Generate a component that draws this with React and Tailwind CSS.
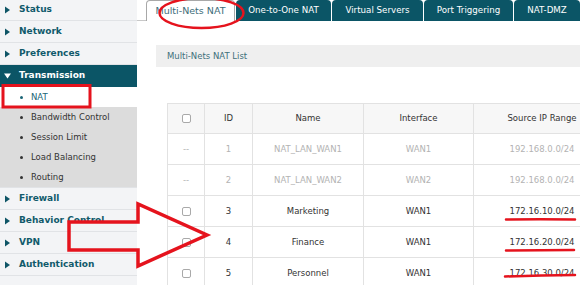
import React from "react";

const topItems = ["Status", "Network", "Preferences"];
const subItems = ["NAT", "Bandwidth Control", "Session Limit", "Load Balancing", "Routing"];
const bottomItems = ["Firewall", "Behavior Control", "VPN", "Authentication"];

const tabs = [
  { name: "One-to-One NAT", w: "w-[95px]" },
  { name: "Virtual Servers", w: "w-[91px]" },
  { name: "Port Triggering", w: "w-[89px]" },
  { name: "NAT-DMZ", w: "w-[66px]" },
];

const rows = [
  { id: 1, name: "NAT_LAN_WAN1", iface: "WAN1", ip: "192.168.0.0/24", off: true },
  { id: 2, name: "NAT_LAN_WAN2", iface: "WAN2", ip: "192.168.0.0/24", off: true },
  { id: 3, name: "Marketing", iface: "WAN1", ip: "172.16.10.0/24" },
  { id: 4, name: "Finance", iface: "WAN1", ip: "172.16.20.0/24" },
  { id: 5, name: "Personnel", iface: "WAN1", ip: "172.16.30.0/24" },
];

const Arrow = ({ down }) => (
  <svg width="7" height="8" viewBox="0 0 7 8" className="shrink-0">
    {down ? <path d="M0 1.5 L7 1.5 L3.5 6.5 Z" fill="#ffffff" /> : <path d="M1 0.5 L6 4 L1 7.5 Z" fill="#0e5566" />}
  </svg>
);

const TopItem = ({ label, first }) => (
  <div
    className={`${first ? "h-[21px]" : "h-[22px]"} flex items-center gap-[8px] pl-[4px] bg-[#f3f4f6] border-b border-[#e1e3e6] text-[9px] font-bold text-[#105a6b]`}
  >
    <Arrow />
    <span>{label}</span>
  </div>
);

const Checkbox = () => (
  <span className="inline-block w-[9px] h-[9px] border border-[#a9a9a9] rounded-[2px] bg-white align-middle" />
);

export default function App() {
  return (
    <div className="relative w-[580px] h-[285px] flex overflow-hidden bg-white font-['DejaVu_Sans',sans-serif]">
      {/* sidebar */}
      <div className="w-[137px] shrink-0 flex flex-col bg-[#f3f4f6]">
        {topItems.map((t, i) => (
          <TopItem key={t} label={t} first={i === 0} />
        ))}
        <div className="h-[22px] flex items-center gap-[8px] pl-[4px] bg-[#0b5566] text-[9px] font-bold text-white">
          <Arrow down />
          <span>Transmission</span>
        </div>
        {subItems.map((s, i) => (
          <div
            key={s}
            className={`h-[20px] flex items-center pl-[20px] gap-[8px] text-[8.5px] ${
              i === 0 ? "bg-white text-[#1a6576]" : "bg-[#dcdcdc] text-[#333333]"
            }`}
          >
            <span className={`w-[3px] h-[3px] rounded-full ${i === 0 ? "bg-[#1a6576]" : "bg-[#333333]"}`} />
            <span>{s}</span>
          </div>
        ))}
        <div className="h-px bg-[#e1e3e6]" />
        {bottomItems.map((t) => (
          <TopItem key={t} label={t} />
        ))}
      </div>

      {/* main */}
      <div className="flex-1 min-w-0 flex flex-col overflow-hidden">
        <div className="h-[21px] flex items-end shrink-0">
          <div className="w-[21px] h-[21px] border-b border-[#c8c8c8]" />
          <div className="w-[89px] h-[21px] shrink-0 flex items-center justify-center bg-white border border-b-0 border-[#a8a8a8] rounded-t-[4px] text-[9.5px] text-[#3d6d79]">
            Multi-Nets NAT
          </div>
          {tabs.map((t) => (
            <div
              key={t.name}
              className={`${t.w} h-[21px] shrink-0 ml-px flex items-center justify-center bg-[#0b5566] rounded-t-[4px] text-[8.7px] text-white`}
            >
              {t.name}
            </div>
          ))}
        </div>

        <div className="pl-[19px] pt-[24px]">
          <div className="h-[22px] flex items-center pl-[11px] bg-[#efefef] text-[8.5px] text-[#41707b]">
            Multi-Nets NAT List
          </div>
          <table className="ml-[11px] mt-[36px] border-collapse text-[8.5px] table-fixed w-[443px]">
            <colgroup>
              <col className="w-[37px]" />
              <col className="w-[48px]" />
              <col className="w-[111px]" />
              <col className="w-[110px]" />
              <col className="w-[137px]" />
            </colgroup>
            <thead>
              <tr className="h-[30px] bg-[#f7f7f7] text-[#333333]">
                <th className="border border-[#e2e2e2] font-normal"><Checkbox /></th>
                <th className="border border-[#e2e2e2] font-normal">ID</th>
                <th className="border border-[#e2e2e2] font-normal">Name</th>
                <th className="border border-[#e2e2e2] font-normal">Interface</th>
                <th className="border border-[#e2e2e2] font-normal">Source IP Range</th>
              </tr>
            </thead>
            <tbody>
              {rows.map((r) => (
                <tr key={r.id} className={`h-[31px] text-center ${r.off ? "text-[#b3b3b3]" : "text-[#333333]"}`}>
                  <td className="border border-[#e2e2e2]">{r.off ? "--" : <Checkbox />}</td>
                  <td className="border border-[#e2e2e2]">{r.id}</td>
                  <td className="border border-[#e2e2e2]">{r.name}</td>
                  <td className="border border-[#e2e2e2]">{r.iface}</td>
                  <td className="border border-[#e2e2e2]">{r.ip}</td>
                </tr>
              ))}
            </tbody>
          </table>
        </div>
      </div>

      {/* red annotations */}
      <svg className="absolute inset-0 pointer-events-none" width="580" height="285" viewBox="0 0 580 285">
        <g fill="none" stroke="#e5131d" strokeLinecap="round">
          <ellipse cx="201.5" cy="13" rx="42" ry="15" strokeWidth="2.5" />
          <rect x="3" y="85.5" width="87" height="21.5" strokeWidth="3" strokeLinecap="butt" />
          <polygon
            points="69,222 138,222 138,204 207,235 138,266 138,250 69,250"
            strokeWidth="3.5"
            strokeLinejoin="miter"
          />
          <path d="M506 219.5 Q540 219 575 219.5" strokeWidth="2.5" />
          <path d="M506 250.5 Q540 250 574 250" strokeWidth="2.5" />
          <path d="M505 276.5 Q540 275.5 575 275" strokeWidth="2.5" />
        </g>
      </svg>
    </div>
  );
}
